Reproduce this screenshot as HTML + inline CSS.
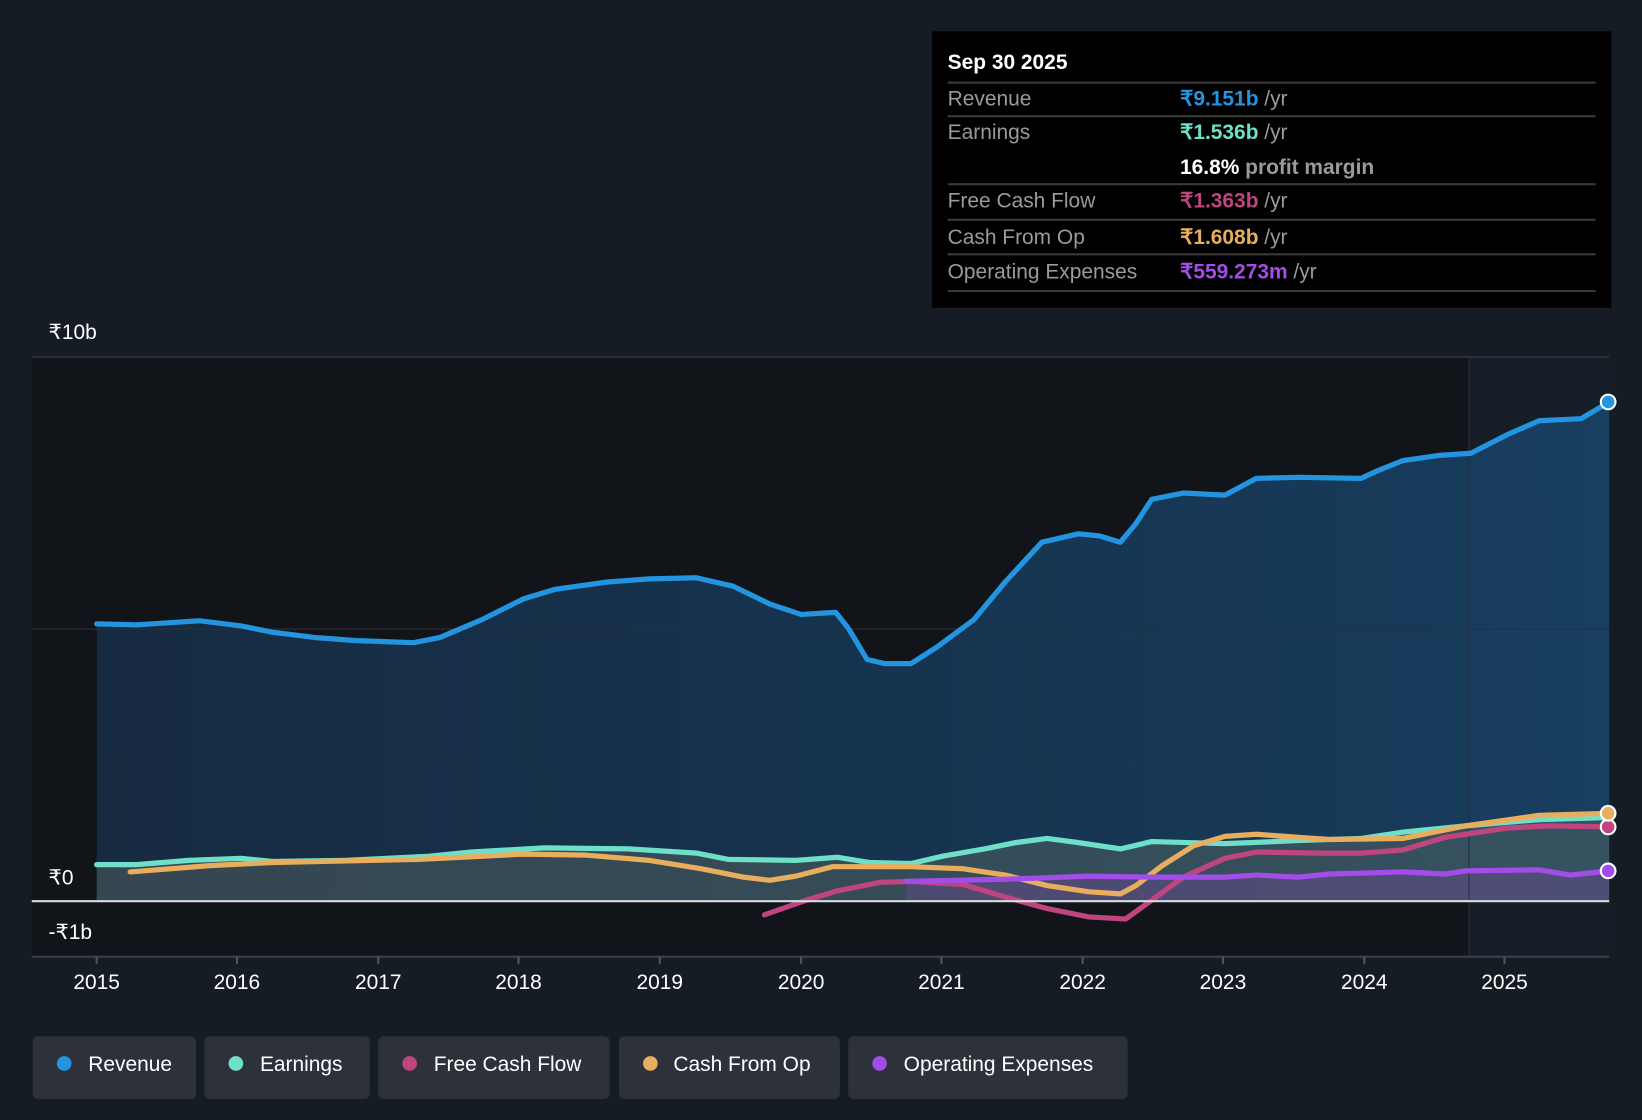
<!DOCTYPE html>
<html><head><meta charset="utf-8"><style>
html,body{margin:0;padding:0;background:#161c24;}
svg{display:block;font-family:"Liberation Sans",sans-serif;}
</style></head><body>
<svg width="1642" height="1120" viewBox="0 0 1568 1070" xmlns="http://www.w3.org/2000/svg">
<defs>
<linearGradient id="rg" x1="0" y1="0" x2="1" y2="0">
<stop offset="0" stop-color="#17304a" stop-opacity="0.8"/>
<stop offset="1" stop-color="#18446a" stop-opacity="0.85"/>
</linearGradient>
</defs>
<rect width="1568" height="1070" fill="#161c24"/>
<rect x="30" y="341" width="1373" height="573" fill="#111419"/>
<rect x="1403" y="341" width="134" height="573" fill="#151d27"/>
<path d="M92,596 L130,597 160,595 190,593 230,598 260,604 300,609 340,612 395,614 420,609 460,592 500,572 530,563 580,556 620,553 665,552 700,560 735,577 765,587 798,585 810,600 828,630 845,634 870,634 895,618 930,592 960,556 995,518 1030,510 1050,512 1070,518 1085,500 1100,477 1130,471 1170,473 1200,457 1240,456 1300,457 1315,450 1340,440 1375,435 1405,433 1440,415 1470,402 1510,400 1537,384 L1537,861 L92,861Z" fill="url(#rg)"/>
<path d="M92,826 130,826 180,822 230,820 260,823 330,822 410,818 450,814 520,810 600,811 665,815 695,821 760,822 800,819 830,824 870,825 900,818 940,811 970,805 1000,801 1030,805 1070,811 1100,804 1170,806 1240,803 1300,801 1340,795 1400,789 1470,783 1537,781 L1537,861 92,861Z" fill="#5a6a64" fill-opacity="0.45"/>
<path d="M865,842 960,840 1040,837 1100,838 1170,838 1200,836 1240,838 1270,835 1340,833 1380,835 1400,832 1470,831 1500,836 1537,832 L1537,861 865,861Z" fill="#6a4a90" fill-opacity="0.45"/>
<line x1="30" y1="341" x2="1537" y2="341" stroke="#3a4048" stroke-width="1"/>
<line x1="30" y1="601" x2="1537" y2="601" stroke="#2a3038" stroke-width="1"/>
<line x1="30" y1="914" x2="1537" y2="914" stroke="#3a4048" stroke-width="2"/>
<line x1="1403" y1="341" x2="1403" y2="914" stroke="#25303c" stroke-width="1"/>
<g fill="none" stroke-width="5" stroke-linejoin="round" stroke-linecap="round">
<polyline stroke="#6ee0c9" points="92,826 130,826 180,822 230,820 260,823 330,822 410,818 450,814 520,810 600,811 665,815 695,821 760,822 800,819 830,824 870,825 900,818 940,811 970,805 1000,801 1030,805 1070,811 1100,804 1170,806 1240,803 1300,801 1340,795 1400,789 1470,783 1537,781"/>
<polyline stroke="#e8ae5e" points="124,833 200,827 260,824 400,821 500,816 560,817 620,822 670,830 710,838 735,841 760,837 795,828 870,828 920,830 960,836 1000,846 1040,852 1070,854 1085,846 1110,827 1140,808 1170,799 1200,797 1240,800 1270,802 1340,801 1400,789 1470,779 1537,777"/>
<polyline stroke="#c0457f" points="730,874 770,860 800,851 840,843 870,842 920,845 960,857 1000,868 1040,876 1075,878 1100,860 1130,838 1170,820 1200,814 1260,815 1300,815 1340,812 1380,800 1440,791 1480,789 1537,790"/>
<polyline stroke="#a24de8" points="865,842 960,840 1040,837 1100,838 1170,838 1200,836 1240,838 1270,835 1340,833 1380,835 1400,832 1470,831 1500,836 1537,832"/>
<polyline stroke="#2394df" points="92,596 130,597 160,595 190,593 230,598 260,604 300,609 340,612 395,614 420,609 460,592 500,572 530,563 580,556 620,553 665,552 700,560 735,577 765,587 798,585 810,600 828,630 845,634 870,634 895,618 930,592 960,556 995,518 1030,510 1050,512 1070,518 1085,500 1100,477 1130,471 1170,473 1200,457 1240,456 1300,457 1315,450 1340,440 1375,435 1405,433 1440,415 1470,402 1510,400 1537,384"/>
</g>
<line x1="30" y1="861" x2="1537" y2="861" stroke="#d8dce0" stroke-width="2"/>
<g stroke="#fff" stroke-width="2">
<circle cx="1536" cy="384" r="7" fill="#2394df"/>
<circle cx="1536" cy="790" r="7" fill="#c0457f"/>
<circle cx="1536" cy="777" r="7" fill="#e8ae5e"/>
<circle cx="1536" cy="832" r="7" fill="#a24de8"/>
</g>
<g fill="#fff" font-size="20">
<text x="46" y="324">₹10b</text>
<text x="46" y="845">₹0</text>
<text x="46" y="897">-₹1b</text>
</g>
<g fill="#fff" font-size="20" text-anchor="middle" stroke="none">
<text x="92" y="945">2015</text><text x="226" y="945">2016</text><text x="361" y="945">2017</text><text x="495" y="945">2018</text><text x="630" y="945">2019</text><text x="765" y="945">2020</text><text x="899" y="945">2021</text><text x="1034" y="945">2022</text><text x="1168" y="945">2023</text><text x="1303" y="945">2024</text><text x="1437" y="945">2025</text>
</g>
<g stroke="#555" stroke-width="2">
<line x1="92" y1="914" x2="92" y2="921"/><line x1="226" y1="914" x2="226" y2="921"/><line x1="361" y1="914" x2="361" y2="921"/><line x1="495" y1="914" x2="495" y2="921"/><line x1="630" y1="914" x2="630" y2="921"/><line x1="765" y1="914" x2="765" y2="921"/><line x1="899" y1="914" x2="899" y2="921"/><line x1="1034" y1="914" x2="1034" y2="921"/><line x1="1168" y1="914" x2="1168" y2="921"/><line x1="1303" y1="914" x2="1303" y2="921"/><line x1="1437" y1="914" x2="1437" y2="921"/>
</g>
<rect x="890" y="30" width="649" height="264" fill="#000"/>
<g stroke="#3a3a3a" stroke-width="2">
<line x1="905" y1="79" x2="1524" y2="79"/><line x1="905" y1="111" x2="1524" y2="111"/><line x1="905" y1="176" x2="1524" y2="176"/><line x1="905" y1="210" x2="1524" y2="210"/><line x1="905" y1="243" x2="1524" y2="243"/><line x1="905" y1="278" x2="1524" y2="278"/>
</g>
<g font-size="20">
<text x="905" y="66" fill="#fff" font-weight="bold">Sep 30 2025</text>
<text x="905" y="101" fill="#9a9a9a">Revenue</text>
<text x="905" y="133" fill="#9a9a9a">Earnings</text>
<text x="905" y="198" fill="#9a9a9a">Free Cash Flow</text>
<text x="905" y="233" fill="#9a9a9a">Cash From Op</text>
<text x="905" y="266" fill="#9a9a9a">Operating Expenses</text>
<text x="1127" y="101" font-weight="bold"><tspan fill="#2394df">₹9.151b</tspan><tspan fill="#9a9a9a" font-weight="normal"> /yr</tspan></text>
<text x="1127" y="133" font-weight="bold"><tspan fill="#6ee0c9">₹1.536b</tspan><tspan fill="#9a9a9a" font-weight="normal"> /yr</tspan></text>
<text x="1127" y="166" font-weight="bold"><tspan fill="#fff">16.8%</tspan><tspan fill="#9a9a9a"> profit margin</tspan></text>
<text x="1127" y="198" font-weight="bold"><tspan fill="#c0457f">₹1.363b</tspan><tspan fill="#9a9a9a" font-weight="normal"> /yr</tspan></text>
<text x="1127" y="233" font-weight="bold"><tspan fill="#e8ae5e">₹1.608b</tspan><tspan fill="#9a9a9a" font-weight="normal"> /yr</tspan></text>
<text x="1127" y="266" font-weight="bold"><tspan fill="#a24de8">₹559.273m</tspan><tspan fill="#9a9a9a" font-weight="normal"> /yr</tspan></text>
</g>
<g font-size="20" fill="#fff">
<rect x="31" y="990" width="156" height="60" rx="5" fill="#2c313a"/>
<circle cx="61" cy="1016" r="7" fill="#2394df"/><text x="84" y="1023">Revenue</text>
<rect x="195" y="990" width="158" height="60" rx="5" fill="#2c313a"/>
<circle cx="225" cy="1016" r="7" fill="#6ee0c9"/><text x="248" y="1023">Earnings</text>
<rect x="361" y="990" width="221" height="60" rx="5" fill="#2c313a"/>
<circle cx="391" cy="1016" r="7" fill="#c0457f"/><text x="414" y="1023">Free Cash Flow</text>
<rect x="591" y="990" width="211" height="60" rx="5" fill="#2c313a"/>
<circle cx="621" cy="1016" r="7" fill="#e8ae5e"/><text x="643" y="1023">Cash From Op</text>
<rect x="810" y="990" width="267" height="60" rx="5" fill="#2c313a"/>
<circle cx="840" cy="1016" r="7" fill="#a24de8"/><text x="863" y="1023">Operating Expenses</text>
</g>
</svg>
</body></html>
